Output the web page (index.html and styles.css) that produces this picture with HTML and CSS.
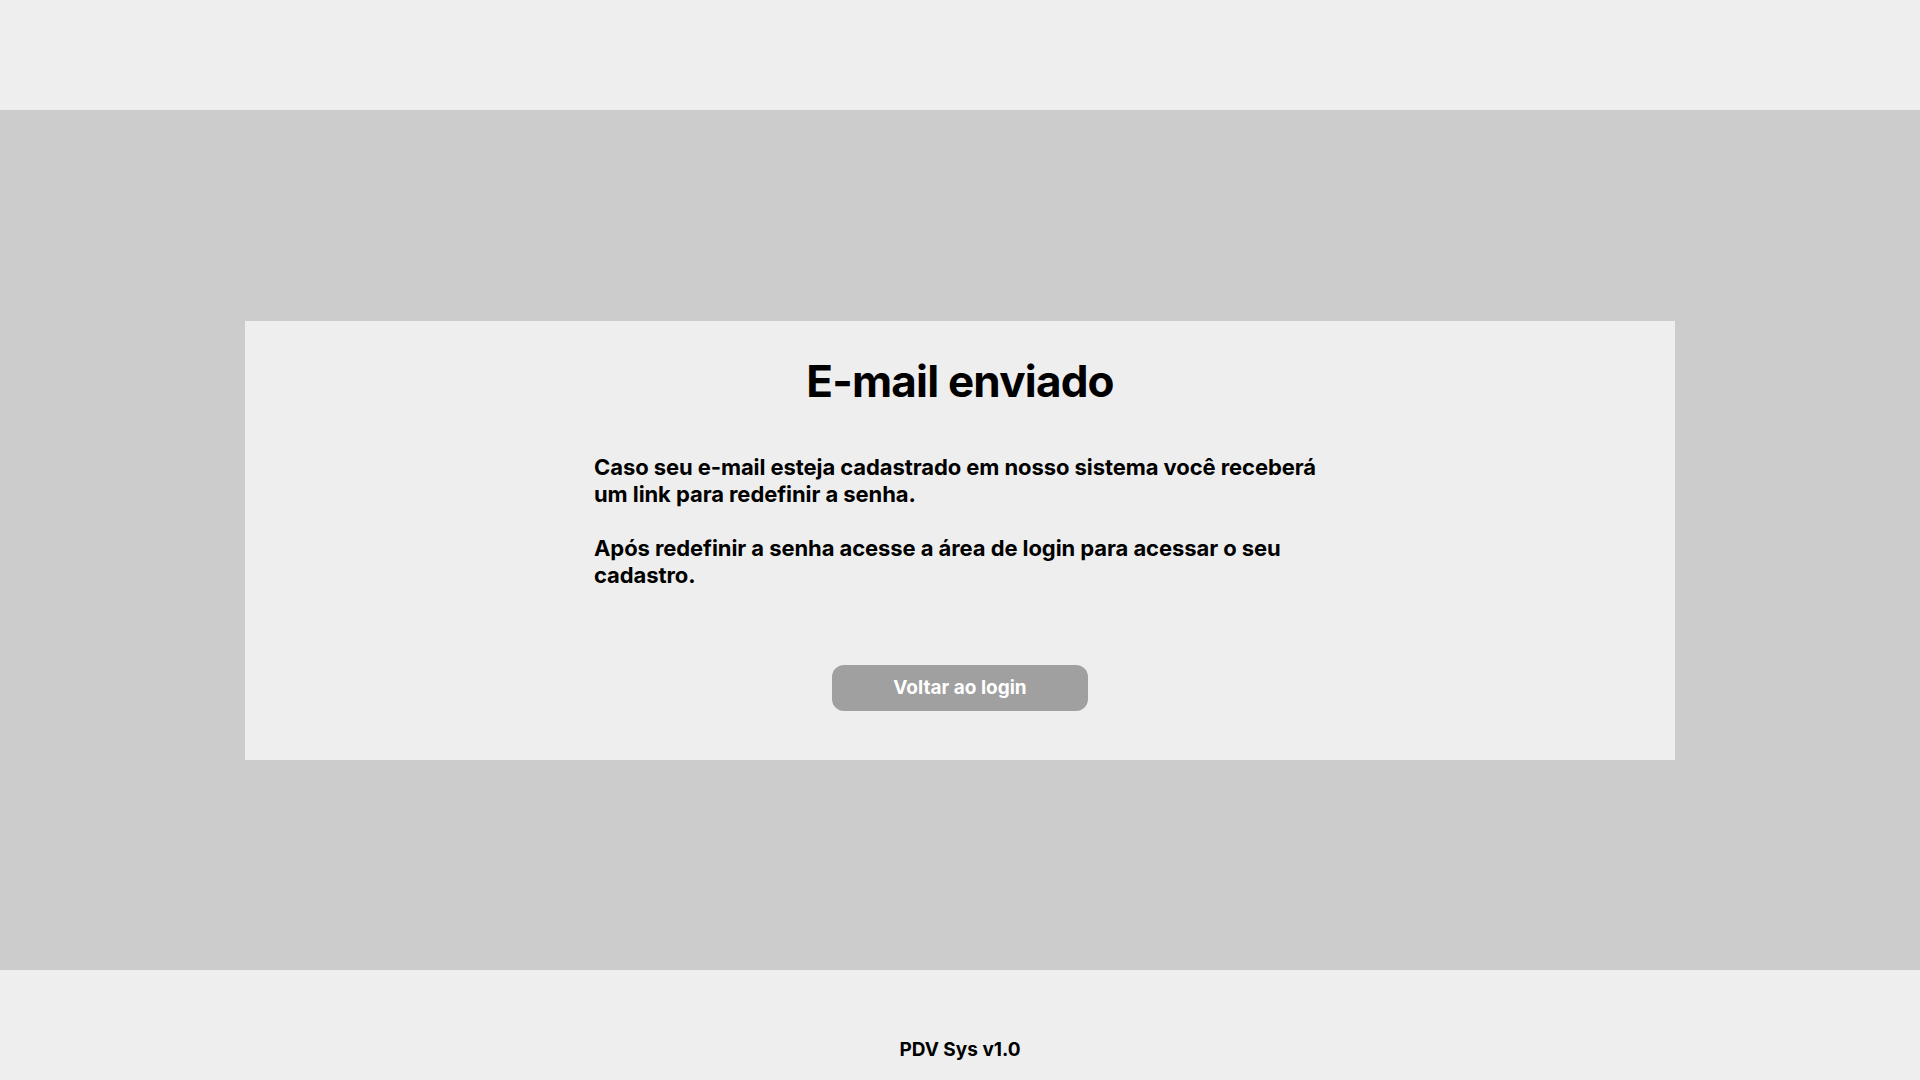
FILE: index.html
```html
<!DOCTYPE html>
<html lang="pt-BR">
<head>
<meta charset="utf-8">
<title>E-mail enviado</title>
<link rel="stylesheet" href="styles.css">
</head>
<body>
<header class="topbar"></header>
<main class="stage">
  <section class="card">
    <h1 class="card-title">E-mail enviado</h1>
    <div class="card-text">
      <p>Caso seu e-mail esteja cadastrado em nosso sistema você receberá um link para redefinir a senha.</p>
      <p>Após redefinir a senha acesse a área de login para acessar o seu cadastro.</p>
    </div>
    <button class="btn-back" type="button">Voltar ao login</button>
  </section>
</main>
<footer class="footer">PDV Sys v1.0</footer>
</body>
</html>
```
FILE: styles.css
```css
* { box-sizing: border-box; }
html, body { margin: 0; padding: 0; }
body {
  font-family: Inter, "Noto Sans", sans-serif;
  background: #eeeeee;
  color: #000;
  height: 1080px;
  display: flex;
  flex-direction: column;
}
.topbar {
  height: 110px;
  background: #eeeeee;
  flex: none;
}
.stage {
  height: 860px;
  background: #cccccc;
  display: flex;
  align-items: center;
  justify-content: center;
  flex: none;
}
.card {
  width: 1430px;
  height: 439px;
  background: #eeeeee;
  padding: 33px 0 0;
  display: flex;
  flex-direction: column;
  align-items: center;
}
.card-title {
  margin: 0;
  font-size: 44px;
  font-weight: 700;
  line-height: normal;
  letter-spacing: -0.8px;
}
.card-text {
  width: 732px;
  margin-top: 46px;
}
.card-text p {
  margin: 0;
  font-size: 22px;
  font-weight: 700;
  line-height: 27px;
  letter-spacing: -0.08px;
}
.card-text p + p {
  margin-top: 27px;
}
.btn-back {
  margin-top: 76px;
  width: 256px;
  height: 46px;
  border: none;
  border-radius: 12px;
  background: #a0a0a0;
  color: #ffffff;
  font-family: Inter, "Noto Sans", sans-serif;
  font-size: 19px;
  font-weight: 700;
}
.footer {
  flex: 1;
  text-align: center;
  padding-top: 68px;
  font-size: 19px;
  font-weight: 700;
}
```
